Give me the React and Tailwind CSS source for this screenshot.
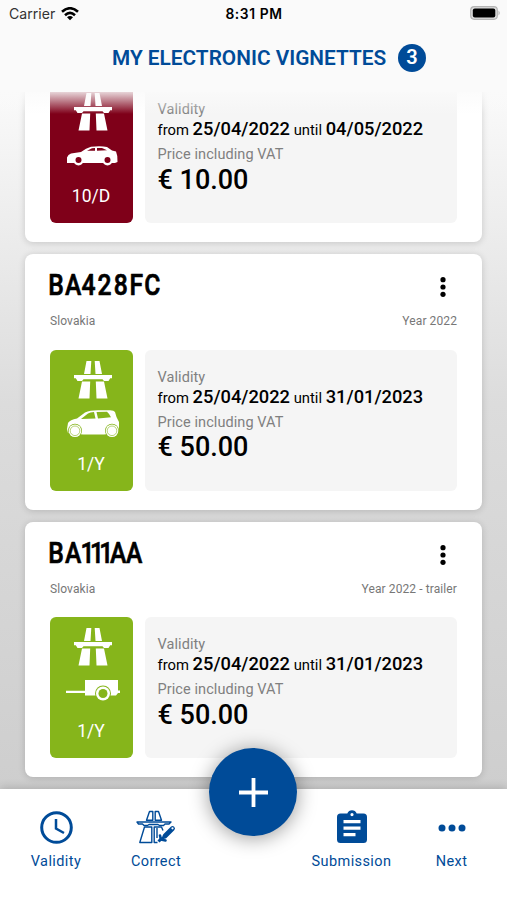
import React from 'react';

const vignettes = [
    { id: 1, tag: '10/D', tagColor: 'bg-[#7f0019]', vehicle: 'sedan', from: '25/04/2022', until: '04/05/2022', price: '€ 10.00' },
    { id: 2, plate: 'BA428FC', plateX: '-2 17.700 37 56 75 93.500 111', country: 'Slovakia', note: 'Year 2022', tag: '1/Y', tagColor: 'bg-[#86b51b]', vehicle: 'hatchback', from: '25/04/2022', until: '31/01/2023', price: '€ 50.00' },
    { id: 3, plate: 'BA111AA', plateX: '-2 17.700 36 47 58 70.500 89.500', country: 'Slovakia', note: 'Year 2022 - trailer', tag: '1/Y', tagColor: 'bg-[#86b51b]', vehicle: 'trailer', from: '25/04/2022', until: '31/01/2023', price: '€ 50.00' },
];

function HighwayIcon() {
    return (
        <svg className="h-[38px] w-[38px]" viewBox="0 0 38 38" fill="currentColor">
            <path d="M12.500 0H17.3L16.500 13H10ZM20.700 0H25.500L28 13H21.500Z" />
            <path d="M0 14H38V17.3H36.2L34.5 20H30L28.5 18.3H9.5L8 20H3.5L1.8 17.3H0Z" />
            <path d="M8 20.5H16.2L15.5 37.5H4.5ZM21.8 20.5H30L33.5 37.5H22.5Z" />
        </svg>
    );
}

function VehicleIcon({ type }) {
    if (type === 'sedan') {
        return (
            <svg className="h-[30px] w-[54px]" viewBox="0 0 54 30">
                <path fill="currentColor" d="M1 21V15.500Q2 12.500 5 11.500L15 10Q20 6 25 4.700Q35 3.500 41 5L46 8.500L50 9.500Q52 14 51.500 20L49 21Z" />
                <path fill="#7f0019" d="M21 8.700L26 6.300L29 5.900V8.700ZM31 5.900H36L41 8.200L31 8.700Z" />
                <circle cx="12.500" cy="18.500" r="5" fill="currentColor" />
                <circle cx="41.500" cy="18.500" r="5" fill="currentColor" />
                <circle cx="12.500" cy="18" r="3" fill="#7f0019" />
                <circle cx="41.500" cy="18" r="3" fill="#7f0019" />
            </svg>
        );
    }
    if (type === 'hatchback') {
        return (
            <svg className="h-[30px] w-[54px]" viewBox="0 0 54 30">
                <path fill="currentColor" d="M2 23L1 19L2 13Q4 9.500 11 8.500L19 2.500Q24 .3 32 .3H44Q48 .5 49 2L50.500 7L53 12V20L51 23L38 24.500H17Z" />
                <path fill="#86b51b" d="M15 9L22 3.600Q24 2.100 28 2L29.500 8.500ZM30.500 2L41 1.800Q43.500 4 45 7.300L32 8.400Z" />
                <circle cx="9" cy="20.800" r="7" fill="#86b51b" />
                <circle cx="46" cy="20.800" r="7" fill="#86b51b" />
                <circle cx="9" cy="20.800" r="6.300" fill="currentColor" />
                <circle cx="46" cy="20.800" r="6.300" fill="currentColor" />
                <circle cx="9" cy="20.800" r="4.800" fill="none" stroke="#86b51b" strokeWidth=".6" />
                <circle cx="46" cy="20.800" r="4.800" fill="none" stroke="#86b51b" strokeWidth=".6" />
            </svg>
        );
    }
    return (
        <svg className="h-[30px] w-[54px]" viewBox="0 0 54 30">
            <path fill="currentColor" d="M19 3H52V13.500H54V16H52L50 18.500H19V16H0V13.800H19Z" />
            <circle cx="37" cy="16.500" r="8" fill="#86b51b" />
            <circle cx="37" cy="16.500" r="7" fill="currentColor" />
            <circle cx="37" cy="16.500" r="4.500" fill="#86b51b" />
        </svg>
    );
}

function CardHeading({ item }) {
    return (
        <>
            <div className="flex h-[32px] items-center justify-between">
                <svg className="h-[32px] w-[120px] overflow-visible" viewBox="0 0 120 32">
                    <text x={item.plateX} y="24" transform="scale(.85 1)" stroke="#000" strokeWidth=".7" strokeLinejoin="round" className="font-['Roboto'] text-[29px] font-medium">{item.plate}</text>
                </svg>
                <svg className="mr-[11px] h-[20px] w-[6px]" viewBox="0 0 6 20">
                    <circle cx="3" cy="2.700" r="2.600" />
                    <circle cx="3" cy="10" r="2.600" />
                    <circle cx="3" cy="17.300" r="2.600" />
                </svg>
            </div>
            <div className="mt-[10px] flex justify-between text-[12px] leading-[16px] tracking-[0.1px] text-[#777]">
                <span>{item.country}</span>
                <span>{item.note}</span>
            </div>
        </>
    );
}

function VignetteCard({ item }) {
    return (
        <div className={`shrink-0 rounded-lg bg-white px-[25px] shadow-[0_1px_7px_rgba(0,0,0,0.16)] ${item.plate ? 'h-[255.500px] pt-[17px]' : 'h-[167px]'}`}>
            {item.plate && <CardHeading item={item} />}
            <div className={`flex gap-[12px] ${item.plate ? 'mt-[20.500px]' : 'pt-[7px]'}`}>
                <div className={`flex h-[141px] w-[83px] flex-col items-center rounded-md pt-[11px] text-white ${item.tagColor}`}>
                    <div className="ml-[3px]"><HighwayIcon /></div>
                    <div className="ml-[3px] mt-[11px]"><VehicleIcon type={item.vehicle} /></div>
                    <span className="mr-[1px] mt-[14px] text-[17.500px] leading-[20px]">{item.tag}</span>
                </div>
                <div className="h-[141px] flex-1 rounded-md bg-[#f5f5f5] pl-[12.500px] pt-[19px]">
                    <p className="text-[14.5px] leading-[18px] tracking-[0.08px] text-[#808080]">Validity</p>
                    <p className="mt-[-1px] whitespace-nowrap text-[14.8px] leading-[22px]">
                        from <span className="text-[18.300px] font-medium">{item.from}</span> until <span className="text-[18.300px] font-medium">{item.until}</span>
                    </p>
                    <p className="mt-[5px] text-[14.5px] leading-[18px] tracking-[0.08px] text-[#808080]">Price including VAT</p>
                    <p className="mt-[-0.500px] text-[27px] leading-[32px] font-medium">{item.price}</p>
                </div>
            </div>
        </div>
    );
}

function NavItem({ label, children, className }) {
    return (
        <div className={`flex flex-col items-center ${className}`}>
            <div className="flex h-[38px] items-center justify-center">{children}</div>
            <span className="mt-[6px] text-[14.5px] leading-[20px] tracking-[0.4px]">{label}</span>
        </div>
    );
}

function App() {
    return (
        <div className="relative flex h-[900px] w-[507px] flex-col overflow-hidden bg-linear-to-b from-[#fafafa] from-10% via-[#dcdcdc] via-45% to-[#cecece] to-88% font-['Roboto',sans-serif] text-black">
            {/* Header */}
            <header className="h-[92px] shrink-0 bg-[#fafafa]">
                <div className="flex h-[28px] items-center justify-between pl-[9px] pr-[6px] font-['Inter',sans-serif]">
                    <div className="flex w-[80px] items-center gap-[6px]">
                        <span className="text-[14.100px] leading-[22px] text-[#333]">Carrier</span>
                        <svg className="h-[14px] w-[18px]" viewBox="0 0 18 14" fill="none" stroke="#000" strokeWidth="2.600">
                            <path d="M1 4.800Q9-2.300 17 4.800M4 8.200Q9 3.700 14 8.200" />
                            <path d="M6 10.300Q9 7.700 12 10.300L9 13.300Z" fill="#000" stroke="none" />
                        </svg>
                    </div>
                    <span className="-ml-[2px] whitespace-nowrap text-[13.800px] leading-[22px] font-semibold tracking-[0.6px]">8:31 PM</span>
                    <div className="flex w-[80px] justify-end">
                        <svg className="-mt-[2px] h-[14px] w-[31px]" viewBox="0 0 31 14">
                            <rect x=".7" y=".7" width="26.600" height="12.600" rx="3.500" fill="#ddd" stroke="#b5b5b5" strokeWidth="1.200" />
                            <rect x="2.800" y="2.500" width="22.500" height="9" rx="2" />
                            <path d="M28.500 4.500Q31 7 28.500 9.500Z" fill="#b5b5b5" />
                        </svg>
                    </div>
                </div>
                <div className="flex items-center gap-[10px] pl-[112px] pt-[16px] whitespace-nowrap text-[#004b98]">
                    <h1 className="w-[276px] text-[20.800px] leading-[26px] font-semibold">MY ELECTRONIC VIGNETTES</h1>
                    <span className="flex h-[28px] w-[28px] items-center justify-center rounded-full bg-[#004b98] pb-[2px] text-[20px] leading-[26px] font-semibold text-white">3</span>
                </div>
            </header>

            {/* Vignette list */}
            <main className="relative h-[697px] shrink-0 overflow-hidden px-[25px]">
                <div className="-mt-[17px] flex flex-col gap-[12px]">
                    {vignettes.map((item) => <VignetteCard key={item.id} item={item} />)}
                </div>
                <div className="absolute inset-x-0 top-0 h-[22px] bg-linear-to-b from-[#fafafa]/85 to-[#fafafa]/0" />
            </main>

            {/* Bottom navigation */}
            <nav className="relative flex h-[111px] shrink-0 bg-white pt-[19px] text-[#004b98] shadow-[0_-2px_8px_rgba(0,0,0,0.15)]">
                <NavItem label="Validity" className="w-[112px]">
                    <svg className="h-[33px] w-[33px]" viewBox="0 0 33 33" fill="none" stroke="currentColor">
                        <circle cx="16.500" cy="16.500" r="14.800" strokeWidth="3" />
                        <path d="M16 8V17.500L24 22" strokeWidth="2.500" />
                    </svg>
                </NavItem>
                <NavItem label="Correct" className="w-[88px]">
                    <svg className="h-[34px] w-[40px]" viewBox="0 0 40 34" fill="none" stroke="currentColor" strokeWidth="1.400" strokeLinejoin="round">
                        <path d="M13.500 1.500H16.800V10.300H10.500ZM19.200 1.500H22.500L25.500 10.300H19.200Z" />
                        <path d="M1 12H35L33 14H29L27.500 15.500H23.500L22 14.500H13L11.500 15.500H8L6.500 14H2.500Z" />
                        <path d="M8.500 17H15.800V32.500H3.800ZM21.500 32.500H18.200V17H25.500L27 20.500M21 18V28" />
                        <path d="M29 26L36.500 18.500" strokeWidth="4.800" strokeLinecap="round" />
                        <path d="M24 25.500L25 29.500L29.500 30.500" strokeWidth="2.600" strokeLinecap="round" />
                        <path d="M29 26L25.500 29.500M25 29L22.500 31.500" strokeWidth="3" />
                        <circle cx="36.500" cy="18.300" r="1.100" fill="#fff" stroke="none" />
                    </svg>
                </NavItem>
                <NavItem label="Submission" className="ml-[96px] w-[111px]">
                    <svg className="mb-[2px] h-[33px] w-[30px]" viewBox="0 0 30 33" fill="currentColor">
                        <path fillRule="evenodd" d="M3.500 3.500H10.300C11.500-1 18.500-1 19.700 3.500H26.500Q30 3.500 30 7V29.500Q30 33 26.500 33H3.500Q0 33 0 29.500V7Q0 3.500 3.500 3.500ZM15 3A1.600 1.600 0 1 0 15 6.200A1.600 1.600 0 1 0 15 3ZM6.500 10V13.200H23.500V10ZM6.500 16.500V19.700H23.500V16.500ZM6.500 23V26.200H18.500V23Z" />
                    </svg>
                </NavItem>
                <NavItem label="Next" className="w-[89px]">
                    <svg className="mt-[1px] h-[8px] w-[28px]" viewBox="0 0 28 8" fill="currentColor">
                        <circle cx="4" cy="4" r="3.500" />
                        <circle cx="14" cy="4" r="3.500" />
                        <circle cx="24" cy="4" r="3.500" />
                    </svg>
                </NavItem>
            </nav>

            {/* Add button */}
            <button className="absolute left-[209px] top-[748px] flex h-[88px] w-[88px] items-center justify-center rounded-full bg-[#004b98] shadow-[0_2px_20px_rgba(0,0,0,0.4)]">
                <svg className="h-[29px] w-[29px]" viewBox="0 0 29 29" stroke="#fff" strokeWidth="3.800">
                    <path d="M14.500 0V29M0 14.500H29" />
                </svg>
            </button>
        </div>
    );
}

export default App;
